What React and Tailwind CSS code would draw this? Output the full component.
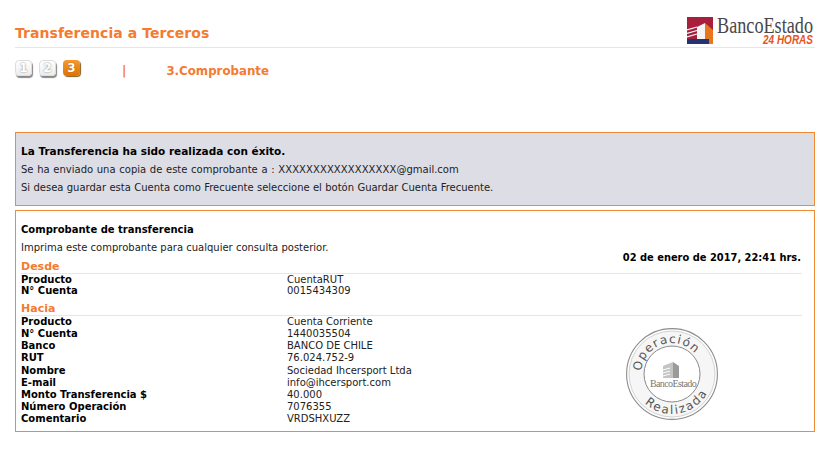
import React from "react";

const font = { fontFamily: '"DejaVu Sans", Verdana, sans-serif' };

const Step = ({ n, active }) => (
  <div
    className={`flex h-[16px] w-[17px] items-center justify-center rounded-[4px] text-[12px] font-bold leading-none text-white ${
      active
        ? "bg-gradient-to-b from-[#f59a2e] to-[#dd7200] shadow-[1px_1px_1px_#8a5a20] [text-shadow:0_0_1px_#8a4a00]"
        : "border border-[#ddd] bg-gradient-to-b from-white to-[#eeeeee] shadow-[1px_2px_1px_#888] [text-shadow:0_0_2px_#777]"
    }`}
  >
    {n}
  </div>
);

const Row = ({ label, value, tight }) => (
  <div className={`flex items-center text-[10px] leading-none ${tight ? "h-[11px]" : "h-[12.125px]"}`}>
    <div className="w-[266px] font-bold text-black">{label}</div>
    <div className="text-[#222]">{value}</div>
  </div>
);

const Logo = () => (
  <svg width="127" height="28" viewBox="0 0 127 28">
    <rect width="26" height="23" fill="#a81f3d" />
    <rect y="22" width="22" height="5" fill="#27336e" />
    <path d="M10 22 L10 10 L18 6 L18 22 Z" fill="#f5f5f5" />
    <path d="M18 6 L26 13 L26 27 L22 27 L22 22 L18 22 Z" fill="#e8761c" />
    <path d="M0 13 L10 10 M0 16.5 L10 13.5 M0 20 L10 17" stroke="#f5f5f5" strokeWidth="1.3" />
    <text
      x="30"
      y="15.5"
      fontSize="23"
      fill="#47474c"
      textLength="96"
      lengthAdjust="spacingAndGlyphs"
      style={{ fontFamily: '"Liberation Serif", serif' }}
    >
      BancoEstado
    </text>
    <text
      x="76"
      y="27"
      fontSize="12.5"
      fontWeight="700"
      fontStyle="italic"
      fill="#e8541a"
      textLength="50"
      lengthAdjust="spacingAndGlyphs"
      style={{ fontFamily: '"Liberation Sans", sans-serif' }}
    >
      24 HORAS
    </text>
  </svg>
);

const Stamp = () => (
  <svg width="92" height="94" viewBox="0 0 92 94" className="absolute left-[610px] top-[117px]">
    <defs>
      <path id="arcTop" d="M 15.1 43.3 A 31 31 0 0 1 75.1 35.4" fill="none" />
      <path id="arcBottom" d="M 18.7 75.2 A 40 40 0 0 0 85.4 52.9" fill="none" />
    </defs>
    <circle cx="46" cy="46" r="45.4" fill="#fff" stroke="#8c8c8c" strokeWidth="1.1" />
    <circle cx="46" cy="46" r="43" fill="#f6f6f6" stroke="#c8c8c8" strokeWidth="0.8" />
    <circle cx="46" cy="46" r="28" fill="#fff" stroke="#8a8a8a" strokeWidth="1" />
    <text fontSize="12" fill="#555" letterSpacing="1.2" style={font}>
      <textPath href="#arcTop">Operación</textPath>
    </text>
    <text fontSize="12" fill="#555" letterSpacing="1.8" style={font}>
      <textPath href="#arcBottom">Realizada</textPath>
    </text>
    <path d="M37 50 L37 38 L47 34 L47 50 Z" fill="#c4c4c4" />
    <path d="M47 34 L53 38 L53 50 L47 50 Z" fill="#9a9a9a" />
    <path d="M37 42 L44 40 M37 45 L44 43 M37 48 L44 46" stroke="#fff" strokeWidth="1" />
    <text
      x="47"
      y="59"
      textAnchor="middle"
      fontSize="10"
      letterSpacing="-0.6"
      fill="#777"
      style={{ fontFamily: '"Liberation Serif", serif' }}
    >
      BancoEstado
    </text>
  </svg>
);

export default function App() {
  return (
    <div className="h-[452px] w-[839px] overflow-hidden bg-white pl-[15px] pr-[24px]" style={font}>
      <div className="flex h-[48px] items-end justify-between border-b border-[#e6e6e6]">
        <h1 className="mb-[5px] text-[14px] font-bold leading-[18px] tracking-[0.05px] text-[#f47b30]">
          Transferencia a Terceros
        </h1>
        <div className="mb-[2px] mr-[1px] flex">
          <Logo />
        </div>
      </div>

      <div className="mt-[12px] flex h-[19px] items-start">
        <div className="flex gap-[7px]">
          <Step n="1" />
          <Step n="2" />
          <Step n="3" active />
        </div>
        <div className="ml-[42px] mt-[4px] text-[12px] font-bold leading-[14px] text-[#f47b30]">|</div>
        <div className="ml-[40px] mt-[4px] text-[11.8px] font-bold leading-[14px] text-[#f47b30]">3.Comprobante</div>
      </div>

      <div className="mt-[53px] h-[74px] border border-[#f08a33] bg-[#dddde6] px-[5px] pt-[12px] text-[10px] text-[#222]">
        <p className="text-[10.5px] font-bold leading-[13px] text-black">La Transferencia ha sido realizada con éxito.</p>
        <p className="mt-[5px] leading-[13px] [word-spacing:0.5px]">
          Se ha enviado una copia de este comprobante a : <span className="tracking-[0.1px]">XXXXXXXXXXXXXXXXX</span>@gmail.com
        </p>
        <p className="mt-[5px] leading-[13px] [word-spacing:0.15px]">Si desea guardar esta Cuenta como Frecuente seleccione el botón Guardar Cuenta Frecuente.</p>
      </div>

      <div className="relative mt-[4px] h-[222px] border border-[#f08a33] px-[5px] pr-[12px] pt-[12px] text-[10px]">
        <p className="font-bold leading-[13px] text-black">Comprobante de transferencia</p>
        <p className="mt-[5px] leading-[13px] text-[#222]">Imprima este comprobante para cualquier consulta posterior.</p>
        <p className="absolute right-[13px] top-[40px] text-[9.9px] font-bold leading-[13px] text-black">
          02 de enero de 2017, 22:41 hrs.
        </p>

        <div className="mt-[6px] border-b border-[#e6e6e6] text-[11px] font-bold leading-[13px] text-[#f47b30]">Desde</div>
        <Row tight label="Producto" value="CuentaRUT" />
        <Row tight label="N° Cuenta" value="0015434309" />

        <div className="mt-[6px] border-b border-[#e6e6e6] text-[11px] font-bold leading-[13px] text-[#f47b30]">Hacia</div>
        <Row label="Producto" value="Cuenta Corriente" />
        <Row label="N° Cuenta" value="1440035504" />
        <Row label="Banco" value="BANCO DE CHILE" />
        <Row label="RUT" value="76.024.752-9" />
        <Row label="Nombre" value="Sociedad Ihcersport Ltda" />
        <Row label="E-mail" value="info@ihcersport.com" />
        <Row label="Monto Transferencia $" value="40.000" />
        <Row label="Número Operación" value="7076355" />
        <Row label="Comentario" value="VRDSHXUZZ" />

        <Stamp />
      </div>
    </div>
  );
}
